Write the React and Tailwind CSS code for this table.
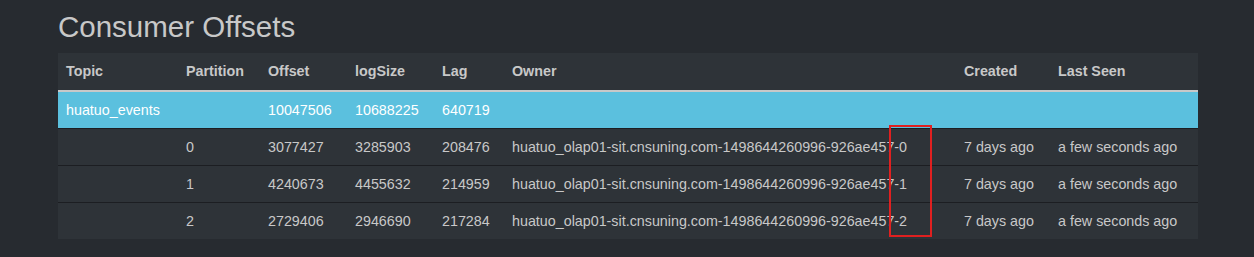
const rows = [
  { partition: "0", offset: "3077427", logSize: "3285903", lag: "208476", owner: "huatuo_olap01-sit.cnsuning.com-1498644260996-926ae457-0" },
  { partition: "1", offset: "4240673", logSize: "4455632", lag: "214959", owner: "huatuo_olap01-sit.cnsuning.com-1498644260996-926ae457-1" },
  { partition: "2", offset: "2729406", logSize: "2946690", lag: "217284", owner: "huatuo_olap01-sit.cnsuning.com-1498644260996-926ae457-2" },
];

const cols = ["w-[120px]", "w-[82px]", "w-[87px]", "w-[87px]", "w-[70px]", "w-[452px]", "w-[94px]", "w-[148px]"];
const heads = ["Topic", "Partition", "Offset", "logSize", "Lag", "Owner", "Created", "Last Seen"];

export default function App() {
  return (
    <div className="min-h-[257px] bg-[#272b30] pl-[58px] pt-[10px] text-[14.3px] text-[#c8c8c8] font-['Liberation_Sans',Arial,sans-serif]">
      <h2 className="mb-[10px] text-[29.5px] leading-[33px] text-[#c8c8c8]">Consumer Offsets</h2>
      <div className="relative w-[1140px]">
        <table className="w-[1140px] table-fixed border-collapse bg-[#2e3338]">
          <colgroup>
            {cols.map((c, i) => (
              <col key={i} className={c} />
            ))}
          </colgroup>
          <thead>
            <tr>
              {heads.map((h) => (
                <th key={h} className="border-b-2 border-[#c8c8c8] px-2 pt-[8px] pb-[9px] text-left align-bottom font-bold leading-5">
                  {h}
                </th>
              ))}
            </tr>
          </thead>
          <tbody>
            <tr className="bg-[#5bc0de] text-white">
              {["huatuo_events", "", "10047506", "10688225", "640719", "", "", ""].map((v, i) => (
                <td key={i} className="h-[37px] border-t border-[#c8c8c8] px-2 leading-5">
                  {v}
                </td>
              ))}
            </tr>
            {rows.map((r) => (
              <tr key={r.partition}>
                {["", r.partition, r.offset, r.logSize, r.lag, r.owner, "7 days ago", "a few seconds ago"].map((v, i) => (
                  <td key={i} className="h-[37px] whitespace-nowrap border-t border-[#1c1e22] px-2 leading-5">
                    {v}
                  </td>
                ))}
              </tr>
            ))}
          </tbody>
        </table>
        <div className="pointer-events-none absolute left-[831px] top-[72px] h-[112px] w-[43px] border-2 border-[#e02020]" />
      </div>
    </div>
  );
}
